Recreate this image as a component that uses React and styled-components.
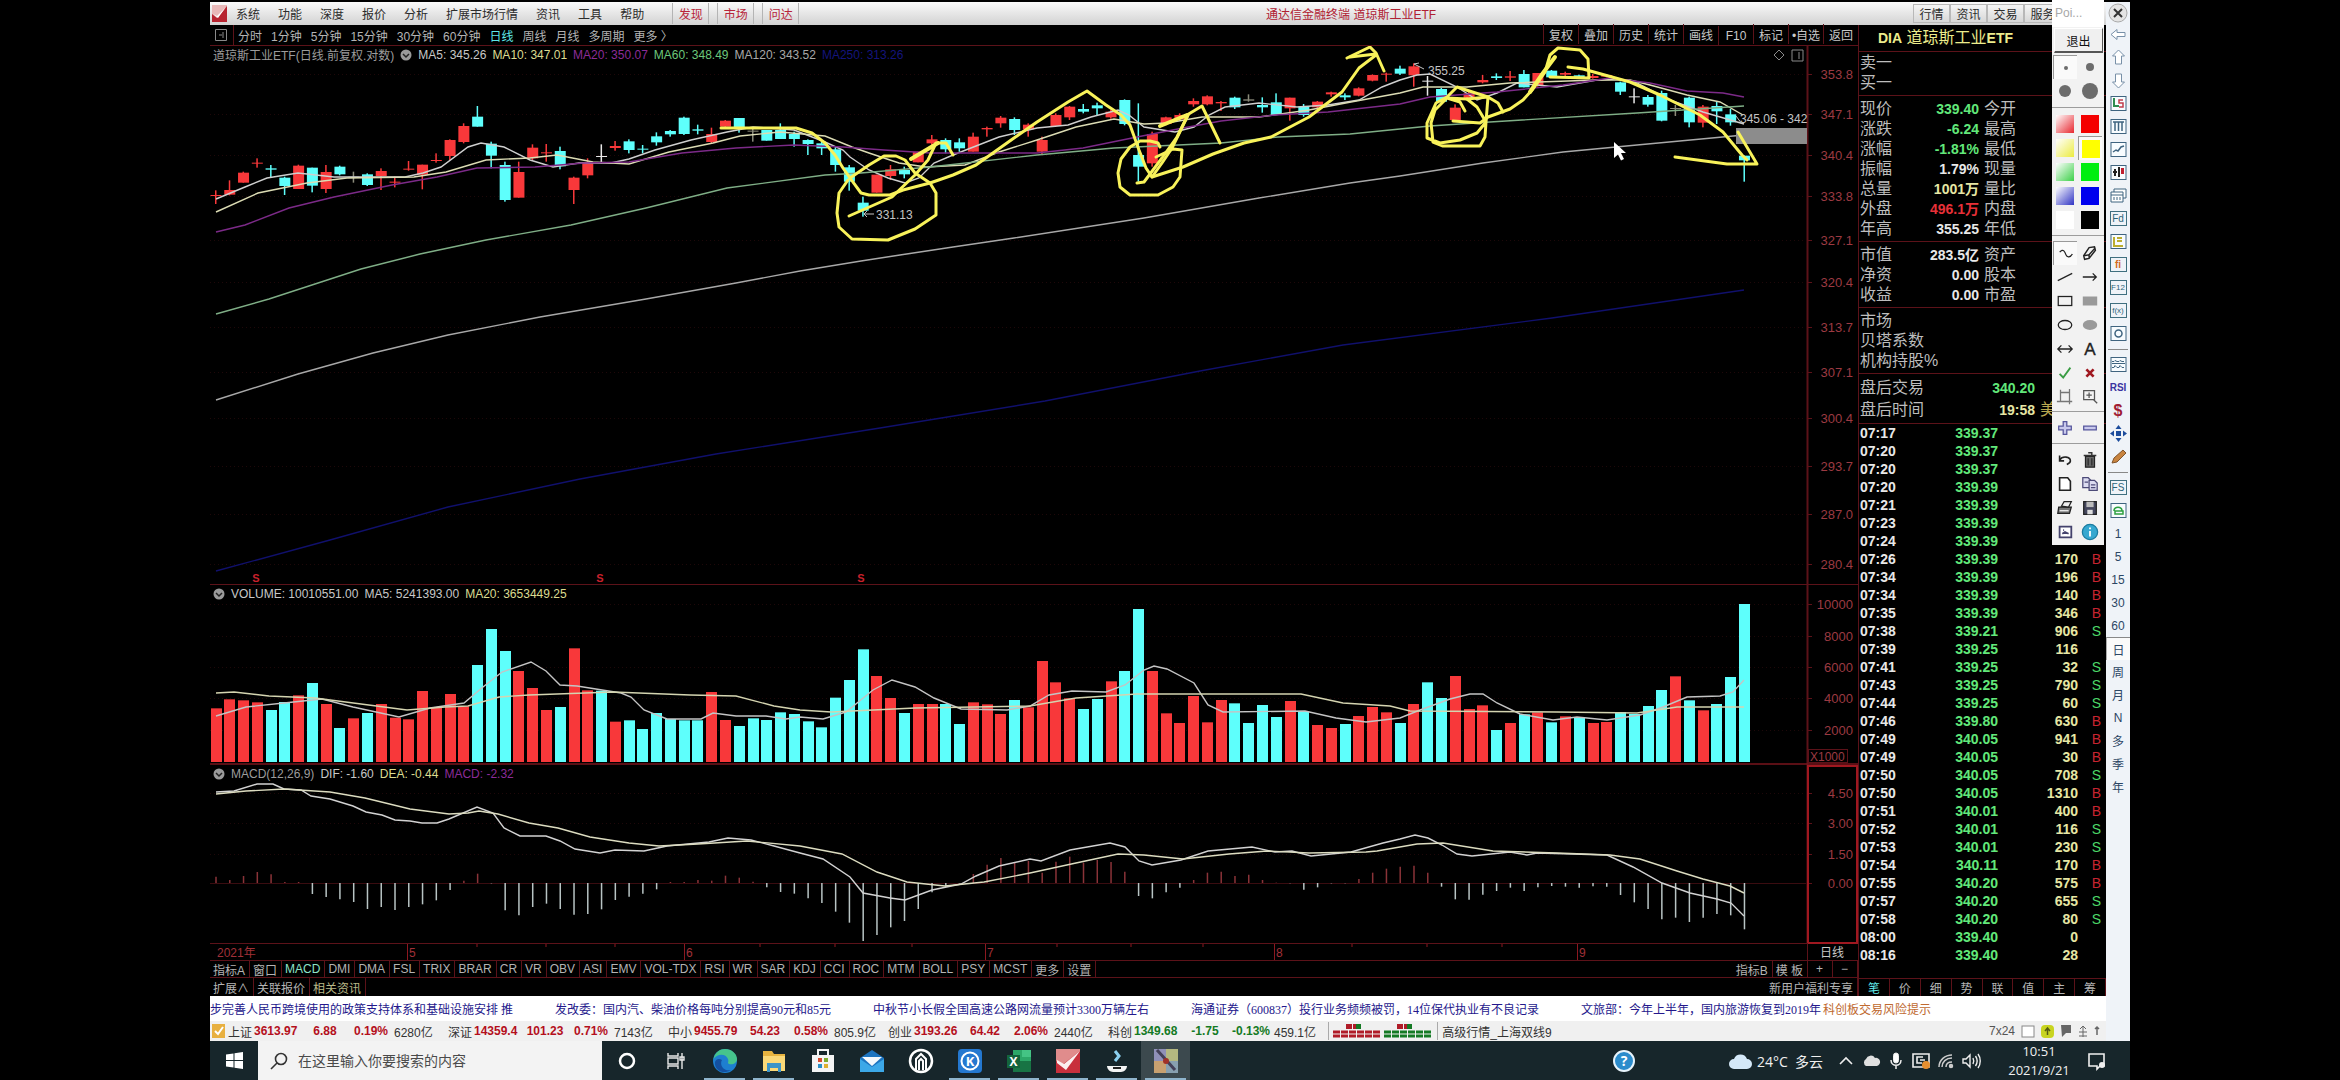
import React from "react";
import styled, { createGlobalStyle, css } from "styled-components";

const GlobalStyle = createGlobalStyle`
  * {
    box-sizing: border-box;
  }
  body {
    margin: 0;
    background: #000;
    font-family: "Liberation Sans", "Noto Sans CJK SC", sans-serif;
    font-size: 12px;
    color: #c8c8c8;
  }
  button {
    margin: 0;
    padding: 0;
    border: 0;
    background: none;
    color: inherit;
    font: inherit;
    white-space: nowrap;
  }
  svg {
    display: block;
    flex: none;
  }
`;

const RED_LINE = "#5c1219";
const UP = "#f8383a";
const DOWN = "#5efffc";

const Screen = styled.div`
  min-height: 100vh;
  padding: 2px 210px 0;
  display: flex;
  flex-direction: column;
`;

const Terminal = styled.div`
  position: relative;
  display: flex;
  flex: 1;
`;

const Desk = styled.div`
  flex: 1;
  min-width: 0;
  display: flex;
  flex-direction: column;
`;

/* ---------- menu bar ---------- */

const MenuBar = styled.header`
  height: 23px;
  display: flex;
  align-items: center;
  background: linear-gradient(#fafafa, #d2d2d2);
  color: #2c2c2c;
  padding-left: 2px;
`;

const MenuItems = styled.nav`
  display: flex;
  align-items: center;
  gap: 18px;
  margin-left: 9px;
`;

const MenuTabs = styled.div`
  display: flex;
  gap: 8px;
  margin-left: 28px;
`;

const MenuTab = styled.button`
  height: 21px;
  width: 37px;
  color: #b8243a;
  border-left: 1px solid #b4b4b4;
  border-right: 1px solid #b4b4b4;
`;

const WindowTitle = styled.div`
  flex: 1;
  padding-right: 10px;
  text-align: center;
  color: #b02032;
`;

const MenuRight = styled.div`
  display: flex;
  width: 193px;
`;

const MenuRightButton = styled.button`
  height: 19px;
  width: 37px;
  border: 1px solid #b8b8b8;
`;

/* ---------- charts ---------- */

const Workspace = styled.div`
  display: flex;
`;

const ChartColumn = styled.main`
  flex: 1;
  min-width: 0;
`;

const Toolbar = styled.div`
  height: 21px;
  display: flex;
  align-items: center;
  border-bottom: 1px solid ${RED_LINE};
`;

const Periods = styled.div`
  flex: 1;
  display: flex;
  align-items: center;
  gap: 9px;
  padding-left: 4px;
`;

const PeriodButton = styled.button`
  color: ${props => (props.$active ? "#5fe8e8" : "#b4b4b4")};
`;

const ToolbarButton = styled.button`
  width: 35px;
  height: 20px;
  border-left: 1px solid ${RED_LINE};
`;

const Pane = styled.section`
  position: relative;

  > svg {
    width: 100%;
    height: auto;
  }
`;

const Legend = styled.div`
  position: absolute;
  top: 0;
  left: 3px;
  height: 17px;
  display: flex;
  align-items: center;
  gap: 6px;
`;

const Reading = styled.span`
  color: ${props => props.$color || "#c8c8c8"};
  white-space: nowrap;
`;

const TabRow = styled.div`
  height: ${props => props.$height || 17}px;
  display: flex;
  border-bottom: ${props => (props.$last ? "0" : `1px solid ${RED_LINE}`)};
`;

const Spacer = styled.div`
  flex: 1;
`;

const IndicatorTab = styled.button`
  padding: 0 4px 0 3px;
  border-right: 1px solid ${RED_LINE};
  color: ${props => props.$color || "#b4b4b4"};
  min-width: ${props => props.$min || 0}px;
`;

/* ---------- quote panel ---------- */

const QuotePanel = styled.aside`
  width: 248px;
  display: flex;
  flex-direction: column;
  overflow: hidden;
  border-left: 1px solid ${RED_LINE};
`;

const QuoteTitle = styled.h1`
  margin: 0;
  height: 27px;
  padding-left: 19px;
  line-height: 26px;
  font-size: 16px;
  font-weight: 400;
  color: #ecec8c;
  border-bottom: 1px solid ${RED_LINE};

  b {
    font-size: 14px;
  }
`;

const QuoteGroup = styled.div`
  padding: ${props => props.$pad || 3}px 0 2px 1px;
  border-bottom: 1px solid ${RED_LINE};
`;

const QuoteRow = styled.div`
  height: 20px;
  display: grid;
  grid-template-columns: 40px 79px 1fr;
  align-items: center;
`;

const AfterRow = styled.div`
  height: 22px;
  display: grid;
  grid-template-columns: 100px 75px 1fr;
  align-items: center;
`;

const Label = styled.span`
  font-size: 16px;
  line-height: 20px;
  white-space: nowrap;
  color: ${props => props.$color || "#bdbdbd"};
`;

const SideLabel = styled(Label)`
  padding-left: 5px;
`;

const Value = styled.span`
  font-size: 14px;
  line-height: 20px;
  font-weight: 700;
  text-align: right;
  white-space: nowrap;
  color: ${props => props.$color || "#e8e8e8"};
`;

const TickTable = styled.table`
  border-collapse: collapse;
  table-layout: fixed;
  width: 100%;
  font-size: 14px;
  font-weight: 700;
`;

const TickCell = styled.td`
  height: 18px;
  line-height: 18px;
  padding: 0;
  text-align: right;
`;

const TimeCell = styled(TickCell)`
  width: 40px;
  padding-left: 1px;
  text-align: left;
  color: #e8e8e8;
`;

const PriceCell = styled(TickCell)`
  width: 99px;
  color: #62e87a;
`;

const AmountCell = styled(TickCell)`
  width: 80px;
  color: #e6e6a4;
`;

const SideCell = styled(TickCell)`
  padding-right: 5px;
  font-weight: 400;
  color: ${props => (props.$side === "B" ? "#c82430" : "#4cd868")};
`;

const QuoteTabs = styled.div`
  height: 18px;
  display: flex;
  border-top: 1px solid ${RED_LINE};
`;

const QuoteTab = styled.button`
  width: 31px;
  border-right: 1px solid ${RED_LINE};
  color: ${props => (props.$active ? "#5fe8e8" : "#b4b4b4")};
`;

/* ---------- news and status ---------- */

const NewsTicker = styled.div`
  height: 25px;
  display: flex;
  align-items: center;
  gap: 42px;
  overflow: hidden;
  background: #fff;
  font-family: "Liberation Serif", "Noto Sans CJK SC", serif;
  white-space: nowrap;
`;

const NewsItem = styled.a`
  color: #24188c;
  text-decoration: none;
`;

const RiskLink = styled.a`
  margin-left: -40px;
  color: #c06a30;
  text-decoration: none;
`;

const StatusBar = styled.footer`
  height: 20px;
  display: flex;
  align-items: center;
  overflow: hidden;
  background: #f0f0f0;
  color: #333;
  padding: 0 6px 0 2px;
`;

const IndexGroup = styled.div`
  display: grid;
  grid-template-columns: 26px 48px 46px 46px 54px;
  align-items: center;
  width: 220px;
`;

const IndexFigure = styled.b`
  text-align: ${props => props.$align || "center"};
  color: ${props => (props.$down ? "#147a24" : "#b40f1c")};
`;

const StatusPart = styled.div`
  display: flex;
  align-items: center;
  height: 18px;
  border-left: 1px solid #aaa;
  padding: 0 5px 0 4px;
`;

const StatusIcons = styled.div`
  display: flex;
  align-items: center;
  gap: 6px;
  color: #555;
`;

/* ---------- drawing palette ---------- */

const Palette = styled.div`
  position: absolute;
  top: -2px;
  right: 26px;
  width: 52px;
  background: #f2f2f2;
  color: #222;
`;

const PaletteTitle = styled.div`
  height: 27px;
  padding: 6px 0 0 3px;
  background: #fff;
  color: #a8a8a8;
`;

const ExitButton = styled.button`
  display: block;
  width: 49px;
  height: 25px;
  margin: 1px 0 2px 2px;
  border: 1px solid;
  border-color: #fff #555 #555 #fff;
  border-bottom-width: 2px;
  background: #f0f0f0;
  color: #111;
`;

const PaletteGroup = styled.div`
  display: grid;
  grid-template-columns: 24px 24px;
  column-gap: 1px;
  padding: ${props => props.$pad || "4px 0 3px 1px"};
  border-bottom: ${props => (props.$last ? "0" : "1px solid #9c9c9c")};
`;

const PaletteButton = styled.button`
  height: 24px;
  display: flex;
  align-items: center;
  justify-content: center;
  ${props =>
    props.$picked &&
    css`
      background: #fafafa;
      border-left: 1px solid #999;
      border-top: 1px solid #999;
    `}
`;

const Swatch = styled.span`
  width: 18px;
  height: 18px;
  background: ${props =>
    props.$pale
      ? `linear-gradient(135deg, #fff, ${props.$color})`
      : props.$color};
`;

/* ---------- right tool strip ---------- */

const Strip = styled.nav`
  width: 24px;
  background: #eff3f8;
  color: #2c4664;
`;

const StripButton = styled.button`
  width: 24px;
  height: ${props => props.$height || 23}px;
  display: flex;
  align-items: center;
  justify-content: center;
  ${props =>
    props.$picked &&
    css`
      background: #fafafa;
      border-top: 1px solid #888;
      border-left: 1px solid #aaa;
    `}
`;

const StripRule = styled.div`
  height: 8px;
  padding-top: 4px;

  &::after {
    content: "";
    display: block;
    margin: 0 2px;
    border-top: 1px solid #888;
  }
`;

const BoxedText = styled.span`
  width: 17px;
  height: 15px;
  border: 1px solid #3f6f80;
  font-size: ${props => (props.$small ? 8 : 10)}px;
  line-height: 13px;
  text-align: center;
  color: ${props => props.$color || "#2c6478"};
`;

const RsiText = styled.b`
  font-size: 10px;
  color: #3a34a0;
`;

const DollarText = styled.b`
  font-size: 16px;
  color: #a01c34;
`;

/* ---------- windows taskbar ---------- */

const Taskbar = styled.div`
  height: 39px;
  display: flex;
  align-items: center;
  background: #17262b;
  color: #f0f0f0;
  font-family: "Open Sans", "Noto Sans CJK SC", sans-serif;
  font-size: 14px;
`;

const TaskButton = styled.button`
  width: ${props => props.$width || 49}px;
  height: 39px;
  display: flex;
  align-items: center;
  justify-content: center;
  position: relative;
  background: ${props => (props.$active ? "#3c494e" : "none")};

  &::after {
    content: "";
    display: ${props => (props.$running ? "block" : "none")};
    position: absolute;
    left: 4px;
    right: 4px;
    bottom: 0;
    height: 2px;
    background: #8fb4cc;
  }
`;

const SearchBox = styled.label`
  width: 344px;
  height: 39px;
  display: flex;
  align-items: center;
  gap: 9px;
  padding-left: 11px;
  background: #f3f3f3;
`;

const SearchInput = styled.input`
  flex: 1;
  min-width: 0;
  border: 0;
  padding: 0;
  background: none;
  font: inherit;

  &::placeholder {
    color: #4a4a4a;
    opacity: 1;
  }
`;

const Tray = styled.div`
  display: flex;
  align-items: center;
  margin-left: auto;
`;

const Weather = styled.div`
  display: flex;
  align-items: center;
  gap: 5px;
  margin-left: 92px;
  white-space: nowrap;
`;

const TrayIcons = styled.div`
  display: flex;
  align-items: center;
  gap: 6px;
  margin-left: 14px;
`;

const Clock = styled.div`
  width: 80px;
  margin-left: 18px;
  text-align: center;
  font-size: 13px;
  line-height: 19px;
`;

const NoticeButton = styled.button`
  margin: 0 23px 0 8px;
`;

/* ---------- data ---------- */

const STEP = 13.77;
const FIRST_X = 216;
const barX = i => FIRST_X + i * STEP;

// [kind, open/close top, open/close bottom, high, low], three units per pixel
const candles = [
  ["r", 585, 588, 571, 612], ["r", 570, 584, 541, 586], ["r", 518, 548, 515, 548],
  ["r", 488, 491, 475, 503], ["c", 505, 509, 495, 532], ["c", 533, 558, 530, 585],
  ["r", 497, 567, 494, 567], ["c", 503, 557, 503, 577], ["r", 516, 567, 495, 579],
  ["c", 500, 523, 497, 526], ["g", 530, 532, 515, 548], ["c", 523, 555, 520, 558],
  ["r", 513, 528, 505, 570], ["r", 545, 547, 530, 562], ["r", 506, 509, 483, 512],
  ["r", 494, 524, 494, 568], ["r", 480, 483, 460, 488], ["r", 420, 468, 418, 480],
  ["r", 378, 426, 370, 430], ["c", 350, 380, 318, 380], ["c", 431, 467, 425, 505],
  ["c", 495, 600, 485, 605], ["r", 516, 593, 485, 593], ["r", 443, 475, 433, 480],
  ["r", 457, 460, 432, 485], ["c", 453, 499, 440, 508], ["r", 533, 570, 530, 612],
  ["r", 486, 526, 475, 535], ["w", 468, 471, 433, 490], ["r", 438, 444, 423, 452],
  ["c", 424, 450, 418, 460], ["c", 446, 449, 435, 460], ["c", 409, 427, 397, 437],
  ["c", 393, 403, 390, 410], ["c", 353, 402, 350, 405], ["c", 388, 392, 374, 403],
  ["r", 402, 426, 383, 430], ["r", 362, 380, 360, 386], ["c", 354, 385, 354, 398],
  ["g", 392, 395, 385, 425], ["c", 390, 422, 390, 422], ["c", 390, 417, 370, 417],
  ["c", 402, 417, 395, 440], ["c", 420, 432, 418, 465], ["c", 430, 445, 425, 465],
  ["c", 448, 495, 440, 515], ["c", 502, 545, 495, 572], ["c", 608, 632, 590, 650],
  ["r", 524, 578, 524, 578], ["r", 508, 528, 495, 540], ["c", 510, 523, 500, 535],
  ["r", 455, 487, 455, 487], ["r", 418, 430, 405, 440], ["c", 420, 448, 415, 460],
  ["c", 427, 445, 415, 455], ["r", 410, 455, 398, 455], ["r", 384, 388, 380, 410],
  ["r", 353, 370, 348, 383], ["c", 357, 390, 352, 405], ["r", 374, 388, 370, 410],
  ["r", 420, 455, 410, 465], ["r", 345, 378, 340, 378], ["r", 320, 352, 318, 360],
  ["c", 327, 335, 312, 340], ["c", 316, 325, 308, 345], ["r", 335, 352, 330, 356],
  ["c", 300, 372, 298, 376], ["c", 465, 500, 310, 545], ["r", 402, 490, 395, 500],
  ["r", 352, 372, 350, 376], ["r", 345, 358, 340, 362], ["r", 303, 313, 295, 320],
  ["r", 289, 313, 286, 316], ["r", 306, 310, 303, 333], ["c", 293, 322, 290, 327],
  ["g", 298, 302, 283, 305], ["c", 315, 322, 292, 338], ["c", 307, 345, 280, 345],
  ["r", 293, 325, 293, 362], ["c", 320, 345, 312, 350], ["r", 305, 322, 303, 324],
  ["r", 277, 283, 275, 290], ["c", 286, 292, 280, 300], ["r", 265, 287, 262, 289],
  ["r", 225, 242, 223, 244], ["r", 221, 224, 218, 245], ["c", 206, 221, 197, 225],
  ["r", 199, 226, 190, 260], ["w", 242, 245, 228, 287], ["c", 267, 305, 264, 308],
  ["r", 323, 360, 313, 360], ["r", 280, 298, 273, 300], ["r", 240, 247, 225, 250],
  ["c", 229, 234, 220, 240], ["r", 229, 233, 213, 243], ["c", 222, 262, 210, 262],
  ["r", 219, 255, 219, 260], ["c", 212, 232, 210, 234], ["r", 219, 224, 215, 230],
  ["c", 226, 235, 224, 237], ["r", 228, 234, 222, 236], ["r", 225, 230, 222, 232],
  ["c", 247, 275, 245, 285], ["w", 289, 292, 265, 310], ["c", 291, 314, 285, 320],
  ["c", 279, 362, 272, 364], ["g", 324, 327, 315, 348], ["c", 293, 367, 290, 382],
  ["r", 320, 368, 315, 382], ["c", 318, 334, 303, 372], ["c", 343, 367, 327, 377],
  ["c", 467, 481, 467, 545]
];

const candleColors = { r: UP, c: DOWN, w: "#e8e8e8", g: "#8a8a7a" };

// top edge of every volume bar, three units per pixel below y = 560
const volumeTops = [
  445, 418, 421, 427, 450, 426, 406, 369, 432, 504, 475, 459, 432, 473, 478,
  393, 442, 402, 439, 315, 207, 273, 333, 384, 450, 441, 265, 391, 392, 485,
  481, 507, 459, 477, 481, 481, 396, 480, 498, 475, 480, 457, 462, 484, 502,
  413, 360, 268, 348, 414, 459, 432, 432, 432, 492, 427, 433, 462, 420, 442,
  303, 367, 415, 447, 417, 364, 333, 147, 333, 460, 489, 408, 487, 420, 430,
  489, 435, 471, 423, 454, 495, 504, 492, 468, 441, 457, 489, 432, 367, 414,
  348, 447, 436, 510, 489, 463, 457, 487, 469, 474, 489, 486, 456, 462, 438,
  390, 349, 421, 451, 432, 351, 132
];

const downVolumes = new Set([
  4, 5, 7, 9, 11, 19, 20, 21, 25, 28, 30, 31, 32, 33, 34, 35, 38, 39, 40, 41,
  42, 43, 44, 45, 46, 47, 50, 53, 54, 58, 63, 64, 66, 67, 74, 75, 76, 77, 79,
  82, 86, 88, 89, 93, 95, 97, 99, 102, 103, 104, 105, 107, 109, 110, 111
]);

const macdBars = [
  950, 960, 948, 936, 943, 966, 966, 1002, 1011, 1018, 1026, 1047, 1041, 1050,
  1041, 1033, 1021, 990, 962, 941, 970, 1051, 1066, 1041, 1031, 1047, 1064,
  1062, 1048, 1020, 1010, 1001, 988, 966, 966, 960, 962, 947, 953, 965, 982,
  996, 1001, 1015, 1029, 1055, 1088, 1143, 1125, 1102, 1083, 1047, 997, 980,
  970, 942, 914, 894, 908, 903, 938, 905, 890, 908, 900, 906, 935, 1008, 1015,
  997, 983, 960, 938, 935, 948, 944, 960, 968, 970, 989, 982, 970, 970, 957,
  938, 926, 920, 917, 938, 980, 1018, 1019, 1004, 993, 983, 993, 982, 978, 980,
  983, 979, 980, 1005, 1027, 1047, 1078, 1073, 1086, 1073, 1062, 1066, 1108
];

const priceLines = [
  {
    color: "#cfcfcf",
    points:
      "216,199 245,187 267,178 298,173 334,177 379,177 405,177 423,173 441,167 468,147 481,143 504,147 530,160 553,167 579,163 611,163 629,159 655,150 691,140 727,132 753,127 794,130 825,142 843,150 850,157 869,170 888,178 905,183 919,178 934,163 953,155 976,146 999,137 1037,128 1068,125 1091,117 1118,110 1129,115 1144,127 1175,132 1194,127 1209,115 1225,107 1259,103 1297,107 1328,105 1359,100 1382,87 1400,80 1417,75 1430,74 1457,87 1477,100 1497,93 1517,83 1557,87 1597,80 1617,79 1637,83 1670,100 1703,112 1744,124"
  },
  {
    color: "#dcdcb4",
    points:
      "216,212 258,193 307,183 347,178 414,177 446,172 486,160 530,158 557,155 593,162 629,164 669,152 713,143 740,136 780,132 825,136 852,147 869,153 899,163 926,167 965,165 999,152 1037,140 1076,127 1114,119 1144,124 1167,123 1202,117 1259,117 1309,110 1351,102 1400,93 1423,87 1467,87 1510,83 1597,80 1630,80 1650,85 1687,95 1720,102 1743,115"
  },
  {
    color: "#7c2a88",
    points:
      "216,232 245,225 289,208 334,197 392,185 437,177 477,168 535,167 584,163 629,162 682,153 736,148 794,145 843,147 884,150 930,153 984,153 1037,153 1083,148 1137,137 1183,128 1221,121 1275,115 1328,112 1400,104 1430,97 1497,92 1563,85 1610,78 1650,83 1687,91 1723,93 1744,97"
  },
  {
    color: "#7fae86",
    points:
      "216,314 269,299 361,269 420,254 486,240 571,225 646,208 727,188 825,175 861,173 930,167 1037,155 1114,148 1221,143 1278,137 1350,134 1430,126 1490,122 1637,113 1683,110 1744,106"
  },
  {
    color: "#a8a8a8",
    points:
      "216,400 298,374 373,353 448,335 540,317 646,299 736,283 800,271 861,261 900,255 953,247 1014,238 1144,218 1259,198 1350,183 1400,176 1483,163 1563,152 1637,145 1744,135"
  },
  {
    color: "#10106c",
    points: "216,571 330,540 448,507 580,479 716,454 880,428 1045,401 1200,371 1343,345 1552,318 1744,290"
  }
];

const volumeLines = [
  {
    color: "#c4c4c4",
    points:
      "216,716 246,707 284,703 322,699 353,707 399,717 430,708 464,703 483,687 502,672 531,662 546,671 560,685 577,686 621,693 631,697 644,710 667,719 701,719 713,713 736,716 766,716 786,719 800,717 823,719 846,712 873,690 892,680 915,687 934,698 961,709 1007,710 1030,706 1049,695 1072,691 1106,692 1125,685 1144,670 1154,666 1167,669 1194,683 1208,705 1223,712 1305,711 1336,718 1366,722 1400,718 1420,710 1450,699 1470,694 1483,694 1497,703 1520,714 1553,720 1577,717 1607,720 1640,715 1663,707 1687,697 1720,696 1733,692 1744,680"
  },
  {
    color: "#d4d4b0",
    points:
      "216,693 234,692 269,696 315,698 361,704 407,710 445,707 468,706 499,697 529,695 613,692 690,695 736,696 774,706 800,710 831,712 915,708 1030,706 1076,698 1137,694 1301,694 1343,703 1390,706 1410,711 1557,712 1637,713 1677,707 1744,707"
  }
];

const macdLines = [
  {
    color: "#d2d2d2",
    points:
      "216,792 234,791 257,784 273,784 284,789 301,790 311,796 330,799 353,806 366,812 382,815 395,820 410,821 422,823 437,823 449,819 477,807 493,813 504,828 520,836 546,836 560,841 575,849 600,853 615,850 644,851 667,846 709,842 728,838 751,840 774,846 800,853 823,859 850,877 863,893 890,898 905,900 932,890 961,884 976,876 999,866 1030,859 1041,861 1070,850 1110,843 1125,847 1139,861 1152,865 1181,860 1208,851 1252,847 1275,852 1292,851 1311,856 1351,852 1383,843 1400,839 1415,835 1428,838 1442,845 1457,854 1472,856 1510,852 1527,855 1537,853 1607,855 1633,867 1662,883 1690,893 1717,899 1731,903 1744,916"
  },
  {
    color: "#dcdcc0",
    points:
      "216,794 246,791 284,789 330,792 365,798 410,809 449,814 468,813 479,811 498,814 529,823 558,828 590,837 629,843 659,846 698,844 747,841 800,846 842,854 877,872 907,882 945,886 984,882 1030,873 1076,863 1118,854 1144,855 1183,859 1229,854 1267,851 1309,853 1366,852 1377,851 1417,844 1443,843 1493,851 1557,853 1610,855 1640,859 1677,871 1703,879 1730,886 1744,893"
  }
];

// freehand marks: [stroke width, points]
const penStrokes = [
  [3, "721,128 796,128 812,133 825,143 835,155 843,168 850,178 861,193 869,195 890,195 903,190 930,183 953,175 976,165 1014,138 1037,122 1068,102 1087,91 1106,105 1121,115 1130,125 1139,150 1146,168 1152,177 1183,167 1213,154 1244,143 1271,137 1309,117 1342,92 1359,68 1376,55"],
  [3, "1347,58 1370,47 1376,53 1384,71"],
  [3, "1350,57 1376,54"],
  [3, "850,178 869,165 884,156 896,156 905,160 915,173 930,183 936,193 936,215 915,229 888,240 852,239 839,227 837,213 839,193 848,180"],
  [3, "849,216 892,197 915,175 928,160 936,143"],
  [4, "911,159 938,143"],
  [3, "938,143 946,143 953,155"],
  [3, "1137,183 1144,182 1162,158 1177,137 1188,115"],
  [4, "1160,126 1187,115"],
  [3, "1187,115 1202,106 1220,143"],
  [3, "1152,177 1162,163 1172,148 1188,115"],
  [3, "1160,147 1158,143 1150,141 1140,141 1130,147 1121,159 1118,173 1120,187 1130,195 1158,195 1173,187 1180,177 1182,150 1173,149 1156,157"],
  [3, "1453,121 1480,123 1488,117 1510,109 1523,100 1532,90 1545,72 1550,55 1558,48 1580,50 1588,59 1589,78 1550,77"],
  [4, "1555,57 1543,73 1530,92"],
  [3, "1465,111 1460,102 1447,98 1435,110 1431,123 1433,142 1443,146 1480,146 1485,137 1486,122 1488,97 1457,87 1447,97 1436,103 1427,123 1427,138 1440,143 1460,140 1477,133 1486,122 1477,107 1467,99 1447,98"],
  [3, "1467,99 1488,97 1498,103 1503,112"],
  [3, "1568,67 1583,69 1630,82 1660,95 1700,115 1723,132 1742,155 1747,160"],
  [3, "1738,132 1757,164 1727,164 1675,157"]
];

const priceScale = [
  [74, "353.8"], [114, "347.1"], [155, "340.4"], [196, "333.8"], [240, "327.1"],
  [282, "320.4"], [327, "313.7"], [372, "307.1"], [418, "300.4"], [466, "293.7"],
  [514, "287.0"], [564, "280.4"]
];
const volumeScale = [
  [604, "10000"], [636, "8000"], [667, "6000"], [698, "4000"], [730, "2000"]
];
const macdScale = [[793, "4.50"], [823, "3.00"], [854, "1.50"], [883, "0.00"]];

const menu = ["系统", "功能", "深度", "报价", "分析", "扩展市场行情", "资讯", "工具", "帮助"];
const periods = ["分时", "1分钟", "5分钟", "15分钟", "30分钟", "60分钟", "日线", "周线", "月线", "多周期", "更多 〉"];
const chartTools = ["复权", "叠加", "历史", "统计", "画线", "F10", "标记", "•自选", "返回"];
const indicators = [
  "指标A", "窗口", "MACD", "DMI", "DMA", "FSL", "TRIX", "BRAR", "CR", "VR", "OBV",
  "ASI", "EMV", "VOL-TDX", "RSI", "WR", "SAR", "KDJ", "CCI", "ROC", "MTM", "BOLL",
  "PSY", "MCST", "更多", "设置"
];

const quoteRows = [
  ["现价", "339.40", "今开", "#62e87a"],
  ["涨跌", "-6.24", "最高", "#62e87a"],
  ["涨幅", "-1.81%", "最低", "#62e87a"],
  ["振幅", "1.79%", "现量"],
  ["总量", "1001万", "量比", "#e6e6a4"],
  ["外盘", "496.1万", "内盘", "#e83038"],
  ["年高", "355.25", "年低"]
];
const capRows = [
  ["市值", "283.5亿", "资产"],
  ["净资", "0.00", "股本"],
  ["收益", "0.00", "市盈"]
];

const ticks = [
  ["07:17", "339.37", "", ""], ["07:20", "339.37", "", ""], ["07:20", "339.37", "", ""],
  ["07:20", "339.39", "", ""], ["07:21", "339.39", "", ""], ["07:23", "339.39", "", ""],
  ["07:24", "339.39", "", ""], ["07:26", "339.39", "170", "B"], ["07:34", "339.39", "196", "B"],
  ["07:34", "339.39", "140", "B"], ["07:35", "339.39", "346", "B"], ["07:38", "339.21", "906", "S"],
  ["07:39", "339.25", "116", ""], ["07:41", "339.25", "32", "S"], ["07:43", "339.25", "790", "S"],
  ["07:44", "339.25", "60", "S"], ["07:46", "339.80", "630", "B"], ["07:49", "340.05", "941", "B"],
  ["07:49", "340.05", "30", "B"], ["07:50", "340.05", "708", "S"], ["07:50", "340.05", "1310", "B"],
  ["07:51", "340.01", "400", "B"], ["07:52", "340.01", "116", "S"], ["07:53", "340.01", "230", "S"],
  ["07:54", "340.11", "170", "B"], ["07:55", "340.20", "575", "B"], ["07:57", "340.20", "655", "S"],
  ["07:58", "340.20", "80", "S"], ["08:00", "339.40", "0", ""], ["08:16", "339.40", "28", ""]
];

const news = [
  "步完善人民币跨境使用的政策支持体系和基础设施安排  推",
  "发改委：国内汽、柴油价格每吨分别提高90元和85元",
  "中秋节小长假全国高速公路网流量预计3300万辆左右",
  "海通证券（600837）投行业务频频被罚，14位保代执业有不良记录",
  "文旅部：今年上半年，国内旅游恢复到2019年"
];

const indexes = [
  ["上证", "3613.97", "6.88", "0.19%", "6280亿"],
  ["深证", "14359.4", "101.23", "0.71%", "7143亿"],
  ["中小", "9455.79", "54.23", "0.58%", "805.9亿"],
  ["创业", "3193.26", "64.42", "2.06%", "2440亿"],
  ["科创", "1349.68", "-1.75", "-0.13%", "459.1亿"]
];

/* ---------- chart pieces ---------- */

const Scale = ({ marks, top, bottom, box }) => (
  <g>
    {marks.map(([y, text]) => (
      <g key={text}>
        <path d={`M210 ${y}.5H1806`} stroke="#1e0809" strokeDasharray="1 3" />
        <path d={`M1808 ${y}.5h4`} stroke={RED_LINE} />
        <text x="1853" y={y + 5} textAnchor="end" fontSize="13" fill="#9c3a42">
          {text}
        </text>
      </g>
    ))}
    <path d={`M1807.5 ${top}V${bottom}`} stroke={RED_LINE} strokeWidth="2" />
    {box && (
      <rect x="1808" y={top + 1} width="49" height={bottom - top - 2} fill="none" stroke="#a01820" strokeWidth="2" />
    )}
  </g>
);

const Lines = ({ lines }) =>
  lines.map(line => (
    <polyline key={line.color} points={line.points} fill="none" stroke={line.color} strokeWidth="1.4" />
  ));

const PriceChart = () => (
  <svg viewBox="210 46 1648 539" role="img" aria-label="日线">
    <Scale marks={priceScale} top={46} bottom={585} />
    <path d="M210 584.5H1858" stroke={RED_LINE} />
    {candles.map(([kind, top, bottom, high, low], i) => (
      <g key={i} fill={candleColors[kind]}>
        <rect x={barX(i) - 1} y={high / 3} width="1.5" height={(low - high) / 3} />
        <rect x={barX(i) - 5.5} y={top / 3} width="11" height={Math.max((bottom - top) / 3, 1)} />
      </g>
    ))}
    <Lines lines={priceLines} />
    <rect x="1736" y="128" width="71" height="16" fill="#8c8c8c" />
    <g fill="#c4c4c4" fontSize="12">
      <text x="1428" y="75">355.25</text>
      <text x="1740" y="123">345.06 - 342</text>
      <text x="876" y="219">331.13</text>
    </g>
    <g stroke="#c4c4c4" fill="none">
      <path d="M1414 64l10 5M1414 64l5 -1M864 214h10M864 214l3 -3M864 214l3 3" />
      <path d="M1736 116l6 8" />
      <path d="M1779 50l5 5 -5 5 -5 -5zM1792 50h11v11h-11zM1799 52v7" stroke="#8a8a8a" />
    </g>
    {penStrokes.map(([width, points]) => (
      <polyline
        key={points}
        points={points}
        fill="none"
        stroke="#f8f25a"
        strokeWidth={width}
        strokeLinecap="round"
        strokeLinejoin="round"
      />
    ))}
    {[256, 600, 861].map(x => (
      <text key={x} x={x} y="582" textAnchor="middle" fontSize="11" fontWeight="700" fill="#c8202c">
        S
      </text>
    ))}
    <path d="M1614 142v16l4 -3.5 3 6 3 -1.5 -3 -6h5z" fill="#fff" />
  </svg>
);

const VolumeChart = () => (
  <svg viewBox="210 585 1648 180" role="img" aria-label="VOLUME">
    <Scale marks={volumeScale} top={585} bottom={765} />
    {volumeTops.map((top, i) => (
      <rect
        key={i}
        x={Math.round(barX(i) - 5.5)}
        y={560 + top / 3}
        width="11"
        height={202 - top / 3}
        fill={downVolumes.has(i) ? DOWN : UP}
      />
    ))}
    <Lines lines={volumeLines} />
    <rect x="1808.5" y="749.5" width="39" height="13" fill="none" stroke={RED_LINE} />
    <text x="1810" y="761" fontSize="12" fill="#9c3a42">X1000</text>
    <path d="M210 764H1858" stroke="#78141c" strokeWidth="1.5" />
  </svg>
);

const MacdChart = () => (
  <svg viewBox="210 765 1648 179" role="img" aria-label="MACD">
    <Scale marks={macdScale} top={765} bottom={944} box />
    <path d="M210 883.5H1806" stroke="#3a0c10" />
    {macdBars.map((end, i) => (
      <path
        key={i}
        d={`M${barX(i)} 883V${560 + end / 3}`}
        stroke={end < 970 ? "#8a3338" : "#b8c4c4"}
        strokeWidth="1.5"
      />
    ))}
    <Lines lines={macdLines} />
    <path d="M210 943.5H1808" stroke={RED_LINE} />
  </svg>
);

const DateAxis = () => (
  <svg viewBox="210 944 1648 17" role="img" aria-label="2021年">
    <g fill="#a03038" fontSize="12">
      <text x="217" y="957">2021年</text>
      {[[407, "5"], [684, "6"], [985, "7"], [1274, "8"], [1577, "9"]].map(([x, text]) => (
        <g key={x}>
          <path d={`M${x}.5 944v16`} stroke="#8c1820" />
          <text x={x + 2} y="957">{text}</text>
        </g>
      ))}
    </g>
    <path d="M477 944v3M546 944v3M615 944v3M760 944v3M835 944v3M912 944v3M1057 944v3M1131 944v3M1203 944v3M1352 944v3M1427 944v3M1502 944v3" stroke="#8c1820" />
    <text x="1832" y="957" textAnchor="middle" fontSize="12" fill="#c8c8c8">日线</text>
    <path d="M1807.5 944v17M210 960.5H1858" stroke={RED_LINE} />
  </svg>
);

const RoundToggle = () => (
  <svg width="12" height="12" viewBox="0 0 12 12">
    <circle cx="6" cy="6" r="5.5" fill="#9a9a9a" />
    <path d="M3 5l3 3 3 -3" stroke="#222" strokeWidth="1.5" fill="none" />
  </svg>
);

const FoldIcon = () => (
  <svg width="24" height="20" viewBox="0 0 24 20">
    <path d="M5.5 4.5h11v11h-11zM13 7v6M12 10H9" fill="none" stroke="#8a8a8a" />
    <path d="M23.5 0v20" stroke={RED_LINE} />
  </svg>
);

/* ---------- palette ---------- */

const Glyph = ({ children }) => (
  <svg width="18" height="18" viewBox="0 0 20 20" fill="none" stroke="#222" strokeWidth="1.4">
    {children}
  </svg>
);

const paletteTools = [
  ["曲线", <path d="M3 8c4 -5 6 0 7 3s5 3 7 -1" />],
  ["橡皮", <path d="M3 13l6 -9 6 -1 1 4 -7 9 -5 1zM3 13l6 -1 0 4M9 12l7 -8" strokeWidth="1.6" />],
  ["直线", <path d="M2 14L18 6" />],
  ["箭头", <path d="M2 10h15M13 6l4 4 -4 4" />],
  ["矩形", <rect x="2.5" y="5" width="15" height="10" />],
  ["实心矩形", <rect x="2" y="5" width="16" height="10" fill="#9a9a9a" stroke="none" />],
  ["椭圆", <ellipse cx="10" cy="10" rx="7.5" ry="5" />],
  ["实心椭圆", <ellipse cx="10" cy="10" rx="8" ry="5.5" fill="#9a9a9a" stroke="none" />],
  ["双箭头", <path d="M2 10h16M6 6l-4 4 4 4M14 6l4 4 -4 4" />],
  ["文字", <text x="10" y="17" textAnchor="middle" fontSize="19" fill="#222" strokeWidth="0.4">A</text>],
  ["对", <path d="M4 11l4 4 8 -11" stroke="#3a9c44" strokeWidth="2" />],
  ["错", <path d="M6 6l8 8M14 6l-8 8" stroke="#a01820" strokeWidth="3" />],
  ["裁剪", <path d="M5 2v13h13M1 15h4M15 1v17M5 5h10" stroke="#777" />],
  ["放大", <path d="M3 3h12v10H3zM9 5v6M6 8h6M14 13l4 4" stroke="#555" />]
];

const zoomTools = [
  ["加", <path d="M8 3h4v5h5v4h-5v5H8v-5H3V8h5z" stroke="#55559c" fill="#c8c8ec" />],
  ["减", <path d="M3 8h14v4H3z" stroke="#55559c" fill="#c8c8ec" />]
];

const fileTools = [
  ["撤销", <path d="M4 10c3 -5 12 -4 12 1 0 2 -2 3 -4 4M4 5v6h5" strokeWidth="1.8" />],
  ["删除", <g><path d="M5 6h10v12H5z" fill="#666" /><path d="M3 5h14M8 2h4v3M8 8v8M12 8v8" strokeWidth="1.6" stroke="#333" /></g>],
  ["新建", <path d="M4 3h9l3 4v10H4z" fill="#fff" strokeWidth="1.8" />],
  ["复制", <g stroke="#4c4a78"><path d="M2 3h6l3 3v8H2z" fill="#dcdcf0" /><path d="M9 6h6l3 3v8H9z" fill="#dcdcf0" /><path d="M11 11h5M11 14h5M4 8h4" /></g>],
  ["打印", <g><path d="M3 9h14l-2 7H2z" fill="#777" /><path d="M6 8l3 -5h8l-3 6z" fill="#eee" /><path d="M4 13h10" stroke="#eee" /></g>],
  ["保存", <g><path d="M3 3h14v14H3z" fill="#44465c" /><path d="M6 3h8v6H6z" fill="#bbb" stroke="none" /><path d="M7 12h6v5H7z" fill="#ddd" stroke="none" /></g>],
  ["截图", <g stroke="#44426c"><path d="M4 4h13v12H4z" fill="#fff" strokeWidth="2" /><path d="M7 12l3 -2 4 2M8 8h1" strokeWidth="2" /></g>],
  ["关于", <g><circle cx="10" cy="10" r="8.5" fill="#36a8d0" stroke="#1c7ca0" /><path d="M10 9v6M10 5v2" stroke="#fff" strokeWidth="2" /></g>]
];

const DrawingPalette = () => (
  <Palette>
    <PaletteTitle>Poi...</PaletteTitle>
    <ExitButton>退出</ExitButton>
    <PaletteGroup $pad="0 0 4px 1px">
      {[2, 4, 6, 8].map(r => (
        <PaletteButton key={r} aria-label={`画笔 ${r}`} $picked={r === 2}>
          <svg width="18" height="18">
            <circle cx="9" cy="9" r={r} fill="#6c6c6c" />
          </svg>
        </PaletteButton>
      ))}
    </PaletteGroup>
    <PaletteGroup>
      {["#e82830", "#f40000", "#ecec40", "#ffff00", "#3cd048", "#00ee10", "#3034c4", "#0000ee", "#ffffff", "#000000"].map(
        (color, i) => (
          <PaletteButton key={color} aria-label={color} $picked={i === 3}>
            <Swatch $color={color} $pale={i % 2 === 0} />
          </PaletteButton>
        )
      )}
    </PaletteGroup>
    <PaletteGroup $pad="5px 0 2px 1px">
      {paletteTools.map(([name, shape], i) => (
        <PaletteButton key={name} aria-label={name} $picked={i === 0}>
          <Glyph>{shape}</Glyph>
        </PaletteButton>
      ))}
    </PaletteGroup>
    <PaletteGroup $pad="4px 0 3px 1px">
      {zoomTools.map(([name, shape]) => (
        <PaletteButton key={name} aria-label={name}>
          <Glyph>{shape}</Glyph>
        </PaletteButton>
      ))}
    </PaletteGroup>
    <PaletteGroup $last $pad="4px 0 1px 1px">
      {fileTools.map(([name, shape]) => (
        <PaletteButton key={name} aria-label={name}>
          <Glyph>{shape}</Glyph>
        </PaletteButton>
      ))}
    </PaletteGroup>
  </Palette>
);

/* ---------- strip ---------- */

const StripSvg = ({ children }) => (
  <svg width="17" height="17" viewBox="0 0 17 17" fill="none" stroke="#3f6480">
    {children}
  </svg>
);
const Frame = () => <rect x="1" y="1.5" width="15" height="14" fill="#f8fcff" />;

const stripTop = [
  ["左移", <StripSvg><path d="M1 8.5l6 -5v3h8v4H7v3z" fill="#fff" stroke="#7890a8" /></StripSvg>],
  ["上移", <StripSvg><path d="M8.5 1l6 6h-3v8h-6V7h-3z" fill="#fff" stroke="#7890a8" /></StripSvg>],
  ["下移", <StripSvg><path d="M8.5 16l6 -6h-3V2h-6v8h-3z" fill="#fff" stroke="#7890a8" /></StripSvg>],
  ["分时图", <StripSvg><Frame /><path d="M4 3v8h5" stroke="#2c8c50" strokeWidth="2" /><path d="M13 5H9v3h4v4H9" stroke="#c03c4c" strokeWidth="1.5" /></StripSvg>],
  ["柱图", <StripSvg><Frame /><path d="M5 4v9M8.5 4v9M12 4v9M3 4h11" strokeWidth="1.5" /></StripSvg>],
  ["走势", <StripSvg><Frame /><path d="M3 11l3 -2 2 1 3 -4 3 -1" strokeWidth="1.5" /></StripSvg>],
  ["K线", <StripSvg><Frame /><path d="M5 5v7M9 3v10M3 8h4" stroke="#222" strokeWidth="2" /><path d="M12.5 4v6" stroke="#c02030" strokeWidth="3" /></StripSvg>],
  ["多窗", <StripSvg><path d="M4 2h12v9H4z" fill="#fff" /><path d="M1 5h12v10H1zM1 8h12M4 10v3M7 10v3M10 10v3" fill="#fff" /></StripSvg>],
  ["财务", <BoxedText>Fd</BoxedText>],
  ["树形", <StripSvg><Frame /><path d="M4 4v9h9M7 5h5M7 8h5" stroke="#bcae30" strokeWidth="2" /></StripSvg>],
  ["资讯", <BoxedText $color="#d46a1c"><b>fi</b></BoxedText>],
  ["F12", <BoxedText $small>F12</BoxedText>],
  ["公式", <BoxedText $small>f(x)</BoxedText>],
  ["设置", <StripSvg><Frame /><circle cx="8.5" cy="8.5" r="3.5" strokeWidth="1.5" /></StripSvg>]
];

const stripMiddle = [
  ["波形", <StripSvg><Frame /><path d="M2 5.5h2l1 -1 2 1h2l1 -1 2 1h2M2 11.5h2l1 -2 2 2h2l1 -2 2 2h2M2 7.5h13" /></StripSvg>],
  ["RSI", <RsiText>RSI</RsiText>],
  ["价格", <DollarText>$</DollarText>],
  ["移动", <StripSvg><path d="M8.5 0l3 4h-6zM8.5 17l3 -4h-6zM0 8.5l4 -3v6zM17 8.5l-4 -3v6zM6 6h5v5H6z" fill="#1c4c9c" stroke="none" /></StripSvg>],
  ["铅笔", <StripSvg><path d="M2 15l2 -5 9 -8 3 3 -9 9z" fill="#c88440" stroke="#80542c" /></StripSvg>]
];

const stripLow = [
  ["FS", <BoxedText>FS</BoxedText>],
  ["绿图", <StripSvg><Frame /><path d="M4 9c0 -5 8 -5 8 0M5 9h8v3H5z" stroke="#2ca040" strokeWidth="1.5" /></StripSvg>]
];

const ToolStrip = () => (
  <Strip>
    <StripButton aria-label="关闭" $height={21}>
      <svg width="20" height="20" viewBox="0 0 20 20">
        <circle cx="10" cy="10" r="9" fill="#e4e4e4" stroke="#aaa" />
        <path d="M6 6l8 8M14 6l-8 8" stroke="#333" strokeWidth="2" />
      </svg>
    </StripButton>
    {stripTop.map(([name, icon]) => (
      <StripButton key={name} aria-label={name}>{icon}</StripButton>
    ))}
    <StripRule />
    {stripMiddle.map(([name, icon]) => (
      <StripButton key={name} aria-label={name}>{icon}</StripButton>
    ))}
    <StripRule />
    {stripLow.map(([name, icon]) => (
      <StripButton key={name} aria-label={name}>{icon}</StripButton>
    ))}
    {["1", "5", "15", "30", "60", "日", "周", "月", "N", "多", "季", "年"].map(text => (
      <StripButton key={text} $picked={text === "日"}>{text}</StripButton>
    ))}
  </Strip>
);

/* ---------- taskbar ---------- */

const AppSvg = ({ children }) => (
  <svg width="26" height="26" viewBox="0 0 26 26" fill="none">
    {children}
  </svg>
);

const apps = [
  { name: "Cortana", icon: <circle cx="13" cy="13" r="7" stroke="#fff" strokeWidth="2.5" /> },
  { name: "任务视图", icon: <path d="M5 5v3h10V5M5 21v-3h10v3M5 10h10v6H5zM19 5v16M17 9h4v3h-4z" stroke="#e8e8e8" strokeWidth="1.4" /> },
  {
    name: "Edge",
    running: true,
    icon: (
      <g>
        <circle cx="13" cy="13" r="12" fill="#1e7fd0" />
        <path d="M1.5 11C3 4 8 1 13 1c7 0 12 5 12 10 0 4 -4 6 -8 5 -2 -1 0 -2 -1 -5 -2 -5 -10 -6 -14.5 0z" fill="#46c48c" />
        <path d="M10 12c-3 5 2 12 9 10 -8 5 -17 0 -16 -8 1 -3 4 -4 7 -2z" fill="#1450a0" />
      </g>
    )
  },
  {
    name: "文件资源管理器",
    running: true,
    icon: (
      <g>
        <path d="M2 3h9l2 3h11v17H2z" fill="#e8b440" />
        <path d="M2 8h22v15H2z" fill="#fbd978" />
        <path d="M6 15h14v9h-3v-4H9v4H6z" fill="#3c94c8" />
      </g>
    )
  },
  {
    name: "Store",
    icon: (
      <g>
        <path d="M8 7V2h10v5" stroke="#f4f4f4" strokeWidth="2" />
        <path d="M2 7h22v17H2z" fill="#f4f4f4" />
        <path d="M8 10h4v4H8z" fill="#d84c30" />
        <path d="M14 10h4v4h-4z" fill="#7cac30" />
        <path d="M8 16h4v4H8z" fill="#2c90c8" />
        <path d="M14 16h4v4h-4z" fill="#e0b030" />
      </g>
    )
  },
  {
    name: "邮件",
    icon: (
      <g>
        <path d="M1 10L13 2l12 8v14H1z" fill="#1c74c0" />
        <path d="M3 9h20l-10 9z" fill="#f4f8fc" />
        <path d="M1 11l12 8 12 -8v13H1z" fill="#3ca8e8" />
      </g>
    )
  },
  {
    name: "浏览器",
    icon: (
      <g stroke="#fff">
        <circle cx="13" cy="13" r="11" strokeWidth="2.5" />
        <path d="M8 22V11l5 -5 5 5v11M11 22v-9l2 -2 2 2v9" strokeWidth="2" />
      </g>
    )
  },
  {
    name: "K",
    running: true,
    icon: (
      <g>
        <rect x="1" y="1" width="24" height="24" rx="4" fill="#2478d0" />
        <circle cx="13" cy="13" r="8.5" stroke="#fff" strokeWidth="2" />
        <text x="13" y="18" textAnchor="middle" fontSize="13" fontWeight="700" fill="#fff">K</text>
      </g>
    )
  },
  {
    name: "Excel",
    running: true,
    icon: (
      <g>
        <path d="M7 2h18v22H7z" fill="#2ca868" />
        <path d="M16 2h9v7h-9z" fill="#44c484" />
        <path d="M7 13h18v11H7z" fill="#187444" />
        <path d="M1 7h13v13H1z" fill="#14643c" />
        <text x="7.5" y="18" textAnchor="middle" fontSize="12" fontWeight="700" fill="#fff">X</text>
      </g>
    )
  },
  {
    name: "通达信",
    running: true,
    icon: (
      <g>
        <path d="M1 1h24v24H1z" fill="#e08c8c" />
        <path d="M1 13l6 4L25 3v22H1z" fill="#c8303c" />
        <path d="M2 12l7 4L25 3 11 22 2 15z" fill="#fbf0f0" />
      </g>
    )
  },
  {
    name: "助手",
    running: true,
    icon: (
      <g>
        <path d="M11 3l4 5 -4 5" stroke="#8cd0f0" strokeWidth="3" />
        <path d="M3 18h20c0 3 -3 6 -6 6H9c-3 0 -6 -3 -6 -6z" fill="#f4f4f4" />
        <path d="M9 20h8" stroke="#222" strokeWidth="2" />
      </g>
    )
  },
  {
    name: "Pointofix",
    running: true,
    active: true,
    icon: (
      <g>
        <path d="M1 1h12v12H1z" fill="#9090b8" />
        <path d="M13 1h12v12H13z" fill="#b4b880" />
        <path d="M1 13h12v12H1z" fill="#c8a070" />
        <path d="M13 13h12v12H13z" fill="#88a0b0" />
        <path d="M4 2l10 11 8 9" stroke="#444058" strokeWidth="3" />
        <circle cx="13" cy="13" r="3" fill="#a03028" />
      </g>
    )
  }
];

const WindowsTaskbar = () => (
  <Taskbar>
    <TaskButton aria-label="开始" $width={48}>
      <svg width="17" height="17" viewBox="0 0 17 17" fill="#fff">
        <path d="M0 2.5l7.5 -1V8H0zM8.5 1.3L17 0v8H8.5zM0 9h7.5v6.5L0 14.5zM8.5 9H17v8l-8.5 -1.3z" />
      </svg>
    </TaskButton>
    <SearchBox>
      <svg width="20" height="20" viewBox="0 0 20 20" fill="none" stroke="#333" strokeWidth="1.6">
        <circle cx="12" cy="8" r="5.5" />
        <path d="M8 12l-6 6" />
      </svg>
      <SearchInput aria-label="搜索" placeholder="在这里输入你要搜索的内容" />
    </SearchBox>
    {apps.map(app => (
      <TaskButton key={app.name} aria-label={app.name} $running={app.running} $active={app.active}>
        <AppSvg>{app.icon}</AppSvg>
      </TaskButton>
    ))}
    <Tray>
      <button aria-label="帮助">
        <svg width="24" height="24" viewBox="0 0 24 24" fill="none">
          <circle cx="12" cy="12" r="10" fill="#2c8ccc" stroke="#e8f4fc" strokeWidth="2" />
          <text x="12" y="17" textAnchor="middle" fontSize="14" fontWeight="700" fill="#fff">?</text>
        </svg>
      </button>
      <Weather>
        <svg width="24" height="18" viewBox="0 0 24 18">
          <path d="M6 17a5 5 0 0 1 0 -10 7 7 0 0 1 13 0 5 5 0 0 1 0 10z" fill="#d4e8f8" />
        </svg>
        <span>24°C&nbsp; 多云</span>
      </Weather>
      <TrayIcons>
        <svg width="18" height="18" viewBox="0 0 18 18" fill="none" stroke="#eee" strokeWidth="1.6">
          <path d="M3 12l6 -6 6 6" />
        </svg>
        <svg width="20" height="18" viewBox="0 0 20 18">
          <path d="M5 14a4 4 0 0 1 0 -7 5 5 0 0 1 9 -1 4 4 0 0 1 2 8z" fill="#e0e0e0" />
        </svg>
        <svg width="18" height="18" viewBox="0 0 18 18" fill="none" stroke="#eee">
          <rect x="6.5" y="1" width="5" height="10" rx="2.5" fill="#fff" />
          <path d="M4 8c0 7 10 7 10 0M9 13v4" strokeWidth="1.5" />
        </svg>
        <svg width="20" height="18" viewBox="0 0 20 18" fill="none" stroke="#eee" strokeWidth="1.6">
          <path d="M2 2h16v13H2zM12 5H6v6h5M9 8h5" />
          <circle cx="15" cy="13" r="4" fill="#e89030" stroke="none" />
        </svg>
        <svg width="18" height="18" viewBox="0 0 18 18" fill="none" stroke="#ccc" strokeWidth="1.5">
          <path d="M2 15C2 8 8 3 15 3M5 15c0 -5 4 -9 10 -9M9 15c0 -3 2 -5 6 -5" />
          <circle cx="14" cy="14" r="1.5" fill="#ccc" />
        </svg>
        <svg width="20" height="18" viewBox="0 0 20 18" fill="none" stroke="#eee" strokeWidth="1.4">
          <path d="M2 7h3l4 -4v12l-4 -4H2zM12 6c1 2 1 4 0 6M14.5 4c2 3 2 7 0 10M17 2c3 4 3 10 0 14" />
        </svg>
      </TrayIcons>
      <Clock>
        10:51
        <br />
        2021/9/21
      </Clock>
      <NoticeButton aria-label="通知">
        <svg width="20" height="20" viewBox="0 0 20 20" fill="none" stroke="#f0f0f0" strokeWidth="1.6">
          <path d="M2 3h15v12h-4l-3 3v-3H2z" />
          <circle cx="15" cy="14" r="3" fill="#f0f0f0" stroke="none" />
        </svg>
      </NoticeButton>
    </Tray>
  </Taskbar>
);

const LogoIcon = () => (
  <svg width="15" height="17" viewBox="0 0 15 17">
    <path d="M0 0h15v17H0z" fill="#b82430" />
    <path d="M0 0h15v1L5 13 0 9z" fill="#e8b8b8" />
    <path d="M1 9l4 2L14 2 6 13z" fill="#fff" />
  </svg>
);

const ServerBlocks = ({ color, second }) => (
  <svg width="48" height="14" viewBox="0 0 48 14">
    <path d="M13 0h6v5h-6zM20 0h3v5h-3z" fill="#b01c28" />
    <path d="M23 0h5v5h-5z" fill={second} />
    <path d="M0 8h47M0 12h47" stroke={color} strokeWidth="3" strokeDasharray="7 1" />
  </svg>
);

const App = () => (
  <Screen>
    <GlobalStyle />
    <Terminal>
      <Desk>
        <MenuBar>
          <LogoIcon />
          <MenuItems>
            {menu.map(item => (
              <button key={item}>{item}</button>
            ))}
          </MenuItems>
          <MenuTabs>
            {["发现", "市场", "问达"].map(item => (
              <MenuTab key={item}>{item}</MenuTab>
            ))}
          </MenuTabs>
          <WindowTitle>通达信金融终端 道琼斯工业ETF</WindowTitle>
          <MenuRight>
            {["行情", "资讯", "交易", "服务"].map(item => (
              <MenuRightButton key={item}>{item}</MenuRightButton>
            ))}
          </MenuRight>
        </MenuBar>

        <Workspace>
          <ChartColumn>
            <Toolbar>
              <FoldIcon />
              <Periods>
                {periods.map(item => (
                  <PeriodButton key={item} $active={item === "日线"}>
                    {item}
                  </PeriodButton>
                ))}
              </Periods>
              <div>
                {chartTools.map(item => (
                  <ToolbarButton key={item}>{item}</ToolbarButton>
                ))}
              </div>
            </Toolbar>

            <Pane>
              <PriceChart />
              <Legend>
                <Reading $color="#9c9c9c">道琼斯工业ETF(日线.前复权.对数)</Reading>
                <RoundToggle />
                <Reading>MA5: 345.26</Reading>
                <Reading $color="#dcdc90">MA10: 347.01</Reading>
                <Reading $color="#8c2c98">MA20: 350.07</Reading>
                <Reading $color="#6cc87c">MA60: 348.49</Reading>
                <Reading $color="#a8a8a8">MA120: 343.52</Reading>
                <Reading $color="#14147c">MA250: 313.26</Reading>
              </Legend>
            </Pane>
            <Pane>
              <VolumeChart />
              <Legend>
                <RoundToggle />
                <Reading>VOLUME: 10010551.00</Reading>
                <Reading>MA5: 5241393.00</Reading>
                <Reading $color="#dcdc90">MA20: 3653449.25</Reading>
              </Legend>
            </Pane>
            <Pane>
              <MacdChart />
              <Legend>
                <RoundToggle />
                <Reading $color="#9c9c9c">MACD(12,26,9)</Reading>
                <Reading>DIF: -1.60</Reading>
                <Reading $color="#dcdc90">DEA: -0.44</Reading>
                <Reading $color="#8c2c98">MACD: -2.32</Reading>
              </Legend>
            </Pane>
            <Pane>
              <DateAxis />
            </Pane>

            <TabRow>
              {indicators.map(item => (
                <IndicatorTab key={item} $color={item === "MACD" ? "#8ce4c8" : undefined}>
                  {item}
                </IndicatorTab>
              ))}
              <Spacer />
              <IndicatorTab>指标B</IndicatorTab>
              <IndicatorTab>模 板</IndicatorTab>
              <IndicatorTab $min={25}>+</IndicatorTab>
              <IndicatorTab $min={25}>−</IndicatorTab>
            </TabRow>
            <TabRow $height={18} $last>
              <IndicatorTab>扩展∧</IndicatorTab>
              <IndicatorTab>关联报价</IndicatorTab>
              <IndicatorTab $color="#b8b888">相关资讯</IndicatorTab>
              <Spacer />
              <IndicatorTab>新用户福利专享</IndicatorTab>
            </TabRow>
          </ChartColumn>

          <QuotePanel>
            <QuoteTitle>
              <b>DIA</b> 道琼斯工业<b>ETF</b>
            </QuoteTitle>
            <QuoteGroup $pad={1}>
              <QuoteRow><Label>卖一</Label></QuoteRow>
              <QuoteRow><Label>买一</Label></QuoteRow>
            </QuoteGroup>
            <QuoteGroup>
              {quoteRows.map(([name, value, side, color]) => (
                <QuoteRow key={name}>
                  <Label>{name}</Label>
                  <Value $color={color}>{value}</Value>
                  <SideLabel>{side}</SideLabel>
                </QuoteRow>
              ))}
            </QuoteGroup>
            <QuoteGroup>
              {capRows.map(([name, value, side]) => (
                <QuoteRow key={name}>
                  <Label>{name}</Label>
                  <Value>{value}</Value>
                  <SideLabel>{side}</SideLabel>
                </QuoteRow>
              ))}
            </QuoteGroup>
            <QuoteGroup>
              <QuoteRow><Label>市场</Label></QuoteRow>
              <QuoteRow><Label>贝塔系数</Label></QuoteRow>
              <QuoteRow><Label>机构持股%</Label></QuoteRow>
            </QuoteGroup>
            <QuoteGroup>
              <AfterRow>
                <Label>盘后交易</Label>
                <Value $color="#62e87a">340.20</Value>
              </AfterRow>
              <AfterRow>
                <Label>盘后时间</Label>
                <Value $color="#e6e6a4">19:58</Value>
                <SideLabel $color="#b8a850">美</SideLabel>
              </AfterRow>
            </QuoteGroup>
            <TickTable>
              <tbody>
                {ticks.map(([time, price, amount, side], i) => (
                  <tr key={i}>
                    <TimeCell>{time}</TimeCell>
                    <PriceCell>{price}</PriceCell>
                    <AmountCell>{amount}</AmountCell>
                    <SideCell $side={side}>{side}</SideCell>
                  </tr>
                ))}
              </tbody>
            </TickTable>
            <Spacer />
            <QuoteTabs>
              {["笔", "价", "细", "势", "联", "值", "主", "筹"].map((item, i) => (
                <QuoteTab key={item} $active={i === 0}>{item}</QuoteTab>
              ))}
            </QuoteTabs>
          </QuotePanel>
        </Workspace>

        <NewsTicker>
          {news.map(item => (
            <NewsItem key={item} href="#news">{item}</NewsItem>
          ))}
          <RiskLink href="#risk">科创板交易风险提示</RiskLink>
        </NewsTicker>
        <StatusBar>
          <svg width="16" height="14" viewBox="0 0 16 14">
            <path d="M0 0h13v14H0z" fill="#e8b040" />
            <path d="M3 7l3 3 5 -7" stroke="#fff" strokeWidth="2" fill="none" />
          </svg>
          {indexes.map(([name, price, change, pct, amount]) => (
            <IndexGroup key={name}>
              <span>{name}</span>
              <IndexFigure $align="left" $down={change[0] === "-"}>{price}</IndexFigure>
              <IndexFigure $down={change[0] === "-"}>{change}</IndexFigure>
              <IndexFigure $down={change[0] === "-"}>{pct}</IndexFigure>
              <span>{amount}</span>
            </IndexGroup>
          ))}
          <StatusPart>
            <ServerBlocks color="#b01c28" second="#147a24" />
            &nbsp;
            <ServerBlocks color="#147a24" second="#147a24" />
          </StatusPart>
          <StatusPart>高级行情_上海双线9</StatusPart>
          <Spacer />
          <StatusIcons>
            <span>7x24</span>
            <svg width="14" height="13" fill="#fff" stroke="#888">
              <rect x="1" y="1" width="12" height="11" />
            </svg>
            <svg width="13" height="13" viewBox="0 0 13 13" fill="none">
              <rect width="13" height="13" rx="4" fill="#c8d420" />
              <path d="M6.5 10V4M4 6l2.5 -3L9 6" stroke="#555c10" strokeWidth="1.5" />
            </svg>
            <svg width="12" height="13" viewBox="0 0 12 13">
              <path d="M1 0h10v8H6l-4 4z" fill="#666" />
            </svg>
            <svg width="10" height="13" viewBox="0 0 10 13" fill="none" stroke="#666">
              <path d="M5 1v11M2 4l3 -3 3 3M1 7h8M1 11h8" />
            </svg>
            <svg width="6" height="13" viewBox="0 0 6 13" fill="none" stroke="#666" strokeWidth="1.5">
              <path d="M3 2v8M1 4l2 -2 2 2" />
            </svg>
          </StatusIcons>
        </StatusBar>
      </Desk>
      <ToolStrip />
      <DrawingPalette />
    </Terminal>
    <WindowsTaskbar />
  </Screen>
);

export default App;
